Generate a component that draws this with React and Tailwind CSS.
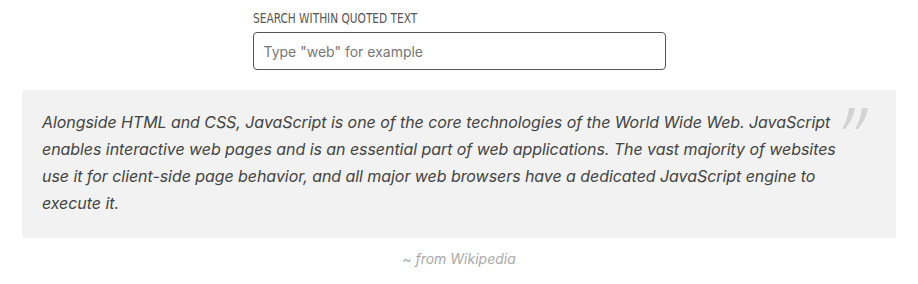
export default function App() {
  return (
    <div className="w-[918px] h-[284px] bg-white" style={{ fontFamily: "Inter, 'Noto Sans', sans-serif" }}>
      <div className="flex flex-col items-center pt-[10px]">
        <div className="w-[413px]">
          <label
            htmlFor="q"
            className="block origin-left scale-x-84 text-[14px] leading-[16px] text-[#555] uppercase font-stretch-condensed"
            style={{ fontFamily: "'DejaVu Sans Condensed', 'DejaVu Sans', sans-serif" }}
          >
            Search within quoted text
          </label>
          <input
            id="q"
            type="text"
            placeholder={'Type "web" for example'}
            className="mt-[6px] w-full h-[38px] rounded-[4px] border border-[#555] px-[10px] text-[14px] text-[#333] placeholder:text-[#777] outline-none"
          />
        </div>
      </div>

      <blockquote className="relative mx-[22px] mt-[20px] rounded-[3px] bg-[#f2f2f2] pl-[20px] pr-[50px] pt-[19px] pb-[21px]">
        <p className="text-[16px] leading-[27px] italic text-[#444] tracking-[-0.06px]">
          Alongside HTML and CSS, JavaScript is one of the core technologies of the World Wide Web. JavaScript
          enables interactive web pages and is an essential part of web applications. The vast majority of websites
          use it for client-side page behavior, and all major web browsers have a dedicated JavaScript engine to
          execute it.
        </p>
        <svg
          className="absolute right-[27px] top-[18px]"
          width="27"
          height="21"
          viewBox="0 0 27 21"
          aria-hidden="true"
        >
          <path d="M7 0h6l-1 4c-1 5-4 11-9 17H0c3-5 5-10 6-15z" fill="#d3d3d3" />
          <path d="M20 0h6l-1 4c-1 5-4 11-9 17h-3c3-5 5-10 6-15z" fill="#d3d3d3" />
        </svg>
      </blockquote>

      <p className="mt-[10px] text-center text-[14px] italic text-[#aaa]">~ from Wikipedia</p>
    </div>
  );
}
